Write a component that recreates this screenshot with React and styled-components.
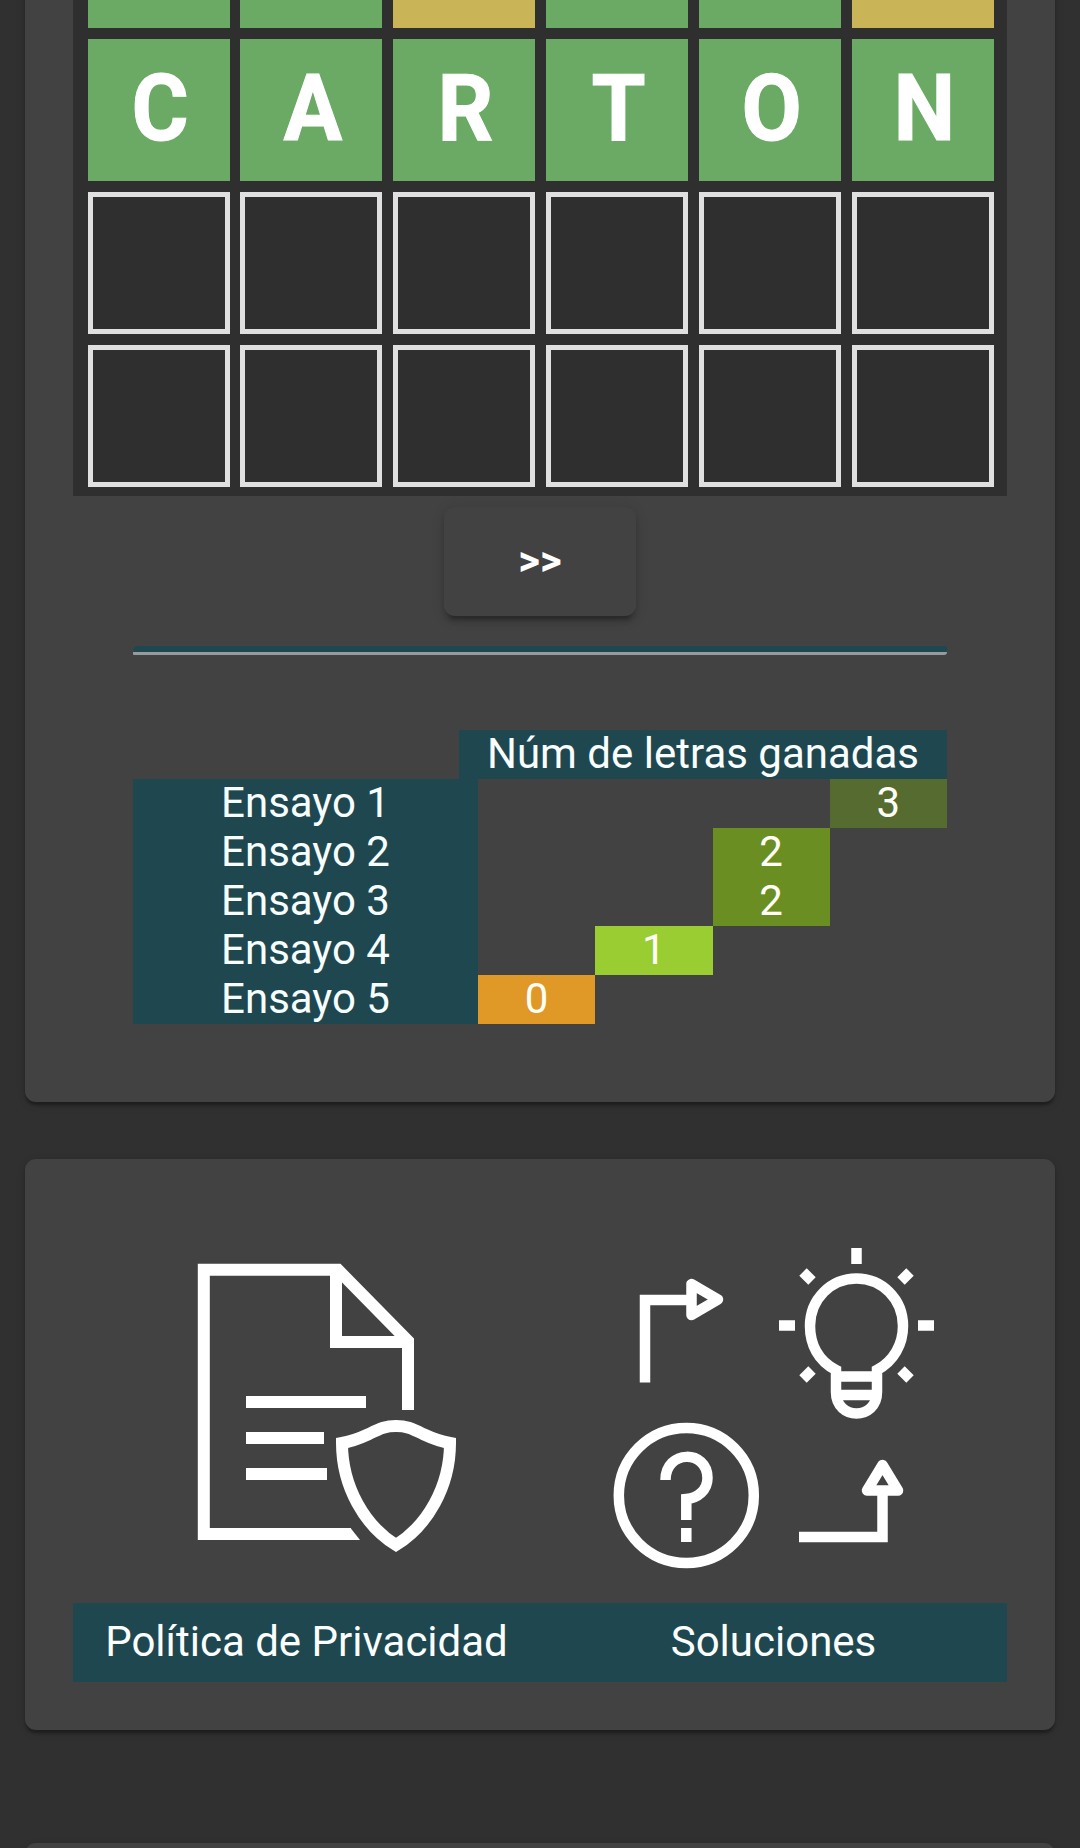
import React from "react";
import styled, { createGlobalStyle } from "styled-components";

const GlobalStyle = createGlobalStyle`
  *, *::before, *::after { box-sizing: border-box; }
  html, body { margin: 0; background: #303030; }
  body { font-family: Roboto, "Liberation Sans", sans-serif; color: #fff; }
`;

const Page = styled.main`
  width: 1080px;
  height: 1848px;
  padding: 0 25px;
  overflow: hidden;
  background: #303030;
  display: flex;
  flex-direction: column;
`;

const Card = styled.section`
  flex: none;
  display: flex;
  flex-direction: column;
  width: 1030px;
  border-radius: 11px;
  background: #424242;
  box-shadow: 0 5.5px 2.75px -2.75px rgba(0, 0, 0, 0.2),
    0 2.75px 2.75px 0 rgba(0, 0, 0, 0.14), 0 2.75px 8.25px 0 rgba(0, 0, 0, 0.12);
`;

const GameCard = styled(Card)`
  height: 1228px;
  margin-top: -126px;
  margin-bottom: 57px;
  align-items: center;
`;

const LinksCard = styled(Card)`
  height: 571px;
  padding: 87px 48px 0;
  margin-bottom: 113px;
`;

const NextCard = styled(Card)`
  height: 120px;
`;

const Board = styled.div`
  width: 934px;
  height: 622px;
  padding: 12px 0 0 14.5px;
  background: #2f2f2f;
  display: grid;
  grid-template-columns: repeat(6, 142px);
  grid-auto-rows: 142px;
  column-gap: 10.9px;
  row-gap: 11px;
`;

const tileColors = { hit: "#6aaa64", near: "#c9b458", empty: "transparent" };

const Tile = styled.div`
  display: flex;
  align-items: center;
  justify-content: center;
  padding: 0 0 3px 3px;
  background: ${(p) => tileColors[p.$state]};
  border: ${(p) => (p.$state === "empty" ? "5px solid #e0e0e0" : "0")};
`;

const Letter = styled.span`
  font-size: 92px;
  font-weight: 700;
  line-height: 1;
  -webkit-text-stroke: 1px #fff;
  transform: scaleX(0.95);
`;

const NextButton = styled.button`
  width: 192px;
  height: 109px;
  margin-top: 11px;
  padding: 0 0 2px;
  border: 0;
  border-radius: 11px;
  background: #424242;
  color: #fff;
  font: 700 42px/1 Roboto, sans-serif;
  box-shadow: 0 8.25px 2.75px -5.5px rgba(0, 0, 0, 0.2),
    0 5.5px 5.5px 0 rgba(0, 0, 0, 0.14), 0 2.75px 13.75px 0 rgba(0, 0, 0, 0.12);
`;

const Divider = styled.hr`
  width: 814px;
  height: 9px;
  margin: 30px 0 75px;
  border: 0;
  border-top: 6px solid #1f4750;
  border-radius: 5px 2px 3px 1px;
  background: #969c9c;
`;

const Table = styled.div`
  width: 814px;
  display: flex;
  flex-direction: column;
  font-size: 42px;
  text-align: center;
`;

const TableHeader = styled.div`
  align-self: flex-end;
  width: 488px;
  height: 49px;
  line-height: 47px;
  background: #1f4750;
  color: #fafeff;
`;

const TableRow = styled.div`
  height: 49px;
  line-height: 48px;
  display: grid;
  grid-template-columns: 345px repeat(4, 1fr);
`;

const RowLabel = styled.div`
  background: #1f4750;
  color: #f7feff;
`;

const scoreColors = ["#e09826", "#9acd32", "#6b8e23", "#556b2f"];

const Score = styled.div`
  grid-column: ${(p) => p.$value + 2};
  background: ${(p) => scoreColors[p.$value]};
  color: #fffff8;
`;

const IconRow = styled.div`
  display: flex;
  height: 357px;
`;

const IconCell = styled.div`
  width: ${(p) => p.$width}px;
  display: flex;
`;

const Drawing = styled.svg`
  display: block;
  fill: none;
  stroke: #fff;
`;

const LinkBar = styled.nav`
  height: 79px;
  width: 934px;
  display: flex;
  background: #1f4750;
`;

const BarLink = styled.a`
  width: ${(p) => p.$width}px;
  padding-top: 14px;
  text-align: center;
  font-size: 42px;
  line-height: 49px;
  color: #fbffff;
`;

const rows = [
  ["hit", "hit", "near", "hit", "hit", "near"].map((state) => ({ state })),
  [..."CARTON"].map((letter) => ({ state: "hit", letter })),
  Array.from({ length: 6 }, () => ({ state: "empty" })),
  Array.from({ length: 6 }, () => ({ state: "empty" })),
];

const scores = [3, 2, 2, 1, 0];

function PrivacyIcon() {
  return (
    <Drawing width="466" height="357" viewBox="73 1246 466 357" strokeWidth="12">
      <path d="M351 1534H203.8V1269.8H338L408 1341V1410" />
      <path d="M336 1270V1342H408" />
      <path d="M246 1402H366M246 1438H324M246 1474H327" />
      <path d="M350.500 1528L360 1540H350.500Z" fill="#fff" stroke="none" />
      <path d="M342 1443Q354 1441 369 1434C381 1428 386 1426 396 1426S411 1428 423 1434Q438 1441 450 1443C450 1487 427 1526 396 1545C365 1526 342 1487 342 1443Z" />
    </Drawing>
  );
}

function SolutionsIcon() {
  return (
    <Drawing width="467" height="357" viewBox="539 1246 467 357" strokeWidth="10.5">
      <path d="M645 1382.500V1300H690" />
      <path d="M691.500 1284V1315L718 1299.500Z" strokeLinejoin="round" />
      <circle cx="686.3" cy="1495.500" r="67.5" />
      <path d="M665.500 1480C665.500 1449.500 707.500 1449.500 707.500 1478C707.500 1490 698 1498 686.300 1499V1520M686.300 1528V1542" />
      <path d="M836 1382V1370C818 1361 810 1344 810 1326C810 1299 831 1278.500 856.500 1278.500S903 1299 903 1326C903 1344 894 1361 877 1370V1392C877 1420.500 836 1420.500 836 1392V1376" />
      <path d="M836 1376.500H877M836 1395H877" />
      <path d="M856.500 1248V1264M779 1325.500H795M918 1325.500H934" />
      <path d="M803 1272L812 1281M910 1272L901 1281M803 1379L812 1370M910 1379L901 1370" />
      <path d="M799 1537H882.500V1493" />
      <path d="M882.500 1465L867 1490.500H898Z" strokeLinejoin="round" />
    </Drawing>
  );
}

export default function App() {
  return (
    <>
      <GlobalStyle />
      <Page>
        <GameCard>
          <Board>
            {rows.flatMap((row, r) =>
              row.map((tile, c) => (
                <Tile key={`${r}-${c}`} $state={tile.state}>
                  {tile.letter && <Letter>{tile.letter}</Letter>}
                </Tile>
              ))
            )}
          </Board>
          <NextButton type="button">&gt;&gt;</NextButton>
          <Divider />
          <Table>
            <TableHeader>Núm de letras ganadas</TableHeader>
            {scores.map((value, i) => (
              <TableRow key={i}>
                <RowLabel>Ensayo {i + 1}</RowLabel>
                <Score $value={value}>{value}</Score>
              </TableRow>
            ))}
          </Table>
        </GameCard>
        <LinksCard>
          <IconRow>
            <IconCell $width={466}>
              <PrivacyIcon />
            </IconCell>
            <IconCell $width={467}>
              <SolutionsIcon />
            </IconCell>
          </IconRow>
          <LinkBar>
            <BarLink $width={467}>Política de Privacidad</BarLink>
            <BarLink $width={467}>Soluciones</BarLink>
          </LinkBar>
        </LinksCard>
        <NextCard />
      </Page>
    </>
  );
}
